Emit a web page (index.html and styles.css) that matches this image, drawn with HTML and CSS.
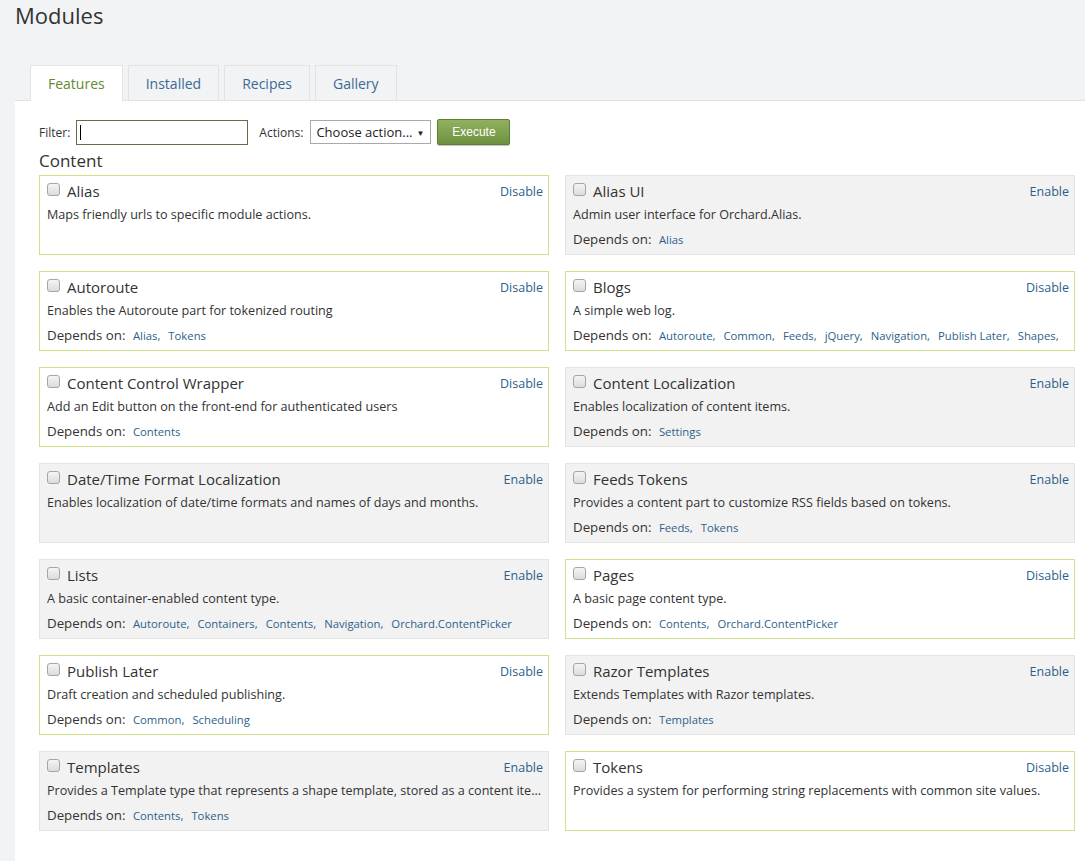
FILE: index.html
```html
<!DOCTYPE html>
<html lang="en">
<head>
<meta charset="utf-8">
<title>Modules</title>
<link rel="stylesheet" href="styles.css">
</head>
<body>
<h1 class="page-title">Modules</h1>
<nav class="tabs">
  <a class="tab active" href="#">Features</a>
  <a class="tab" href="#">Installed</a>
  <a class="tab" href="#">Recipes</a>
  <a class="tab" href="#">Gallery</a>
</nav>
<main class="panel">
  <div class="toolbar">
    <label class="lbl" for="filter">Filter:</label>
    <span class="filter-box"><input id="filter" class="filter" type="text"><span class="caret"></span></span>
    <label class="lbl actions-lbl" for="actions">Actions:</label>
    <span class="select" id="actions"><span>Choose action...</span><span class="arrow">&#9660;</span></span>
    <button class="execute" type="button">Execute</button>
  </div>
  <h2 class="category">Content</h2>
  <div class="grid">
    <section class="card on">
      <div class="head"><span class="chk"></span><span class="name">Alias</span><a class="act" href="#">Disable</a></div>
      <p class="desc">Maps friendly urls to specific module actions.</p>
    </section>
    <section class="card off">
      <div class="head"><span class="chk"></span><span class="name">Alias UI</span><a class="act" href="#">Enable</a></div>
      <p class="desc">Admin user interface for Orchard.Alias.</p>
      <div class="deps">Depends on: <a href="#">Alias</a></div>
    </section>

    <section class="card on">
      <div class="head"><span class="chk"></span><span class="name">Autoroute</span><a class="act" href="#">Disable</a></div>
      <p class="desc">Enables the Autoroute part for tokenized routing</p>
      <div class="deps">Depends on: <a href="#">Alias,</a><a href="#">Tokens</a></div>
    </section>
    <section class="card on">
      <div class="head"><span class="chk"></span><span class="name">Blogs</span><a class="act" href="#">Disable</a></div>
      <p class="desc">A simple web log.</p>
      <div class="deps">Depends on: <a href="#">Autoroute,</a><a href="#">Common,</a><a href="#">Feeds,</a><a href="#">jQuery,</a><a href="#">Navigation,</a><a href="#">Publish Later,</a><a href="#">Shapes,</a></div>
    </section>

    <section class="card on">
      <div class="head"><span class="chk"></span><span class="name">Content Control Wrapper</span><a class="act" href="#">Disable</a></div>
      <p class="desc">Add an Edit button on the front-end for authenticated users</p>
      <div class="deps">Depends on: <a href="#">Contents</a></div>
    </section>
    <section class="card off">
      <div class="head"><span class="chk"></span><span class="name">Content Localization</span><a class="act" href="#">Enable</a></div>
      <p class="desc">Enables localization of content items.</p>
      <div class="deps">Depends on: <a href="#">Settings</a></div>
    </section>

    <section class="card off">
      <div class="head"><span class="chk"></span><span class="name">Date/Time Format Localization</span><a class="act" href="#">Enable</a></div>
      <p class="desc">Enables localization of date/time formats and names of days and months.</p>
    </section>
    <section class="card off">
      <div class="head"><span class="chk"></span><span class="name">Feeds Tokens</span><a class="act" href="#">Enable</a></div>
      <p class="desc">Provides a content part to customize RSS fields based on tokens.</p>
      <div class="deps">Depends on: <a href="#">Feeds,</a><a href="#">Tokens</a></div>
    </section>

    <section class="card off">
      <div class="head"><span class="chk"></span><span class="name">Lists</span><a class="act" href="#">Enable</a></div>
      <p class="desc">A basic container-enabled content type.</p>
      <div class="deps">Depends on: <a href="#">Autoroute,</a><a href="#">Containers,</a><a href="#">Contents,</a><a href="#">Navigation,</a><a href="#">Orchard.ContentPicker</a></div>
    </section>
    <section class="card on">
      <div class="head"><span class="chk"></span><span class="name">Pages</span><a class="act" href="#">Disable</a></div>
      <p class="desc">A basic page content type.</p>
      <div class="deps">Depends on: <a href="#">Contents,</a><a href="#">Orchard.ContentPicker</a></div>
    </section>

    <section class="card on">
      <div class="head"><span class="chk"></span><span class="name">Publish Later</span><a class="act" href="#">Disable</a></div>
      <p class="desc">Draft creation and scheduled publishing.</p>
      <div class="deps">Depends on: <a href="#">Common,</a><a href="#">Scheduling</a></div>
    </section>
    <section class="card off">
      <div class="head"><span class="chk"></span><span class="name">Razor Templates</span><a class="act" href="#">Enable</a></div>
      <p class="desc">Extends Templates with Razor templates.</p>
      <div class="deps">Depends on: <a href="#">Templates</a></div>
    </section>

    <section class="card off">
      <div class="head"><span class="chk"></span><span class="name">Templates</span><a class="act" href="#">Enable</a></div>
      <p class="desc">Provides a Template type that represents a shape template, stored as a content ite...</p>
      <div class="deps">Depends on: <a href="#">Contents,</a><a href="#">Tokens</a></div>
    </section>
    <section class="card on">
      <div class="head"><span class="chk"></span><span class="name">Tokens</span><a class="act" href="#">Disable</a></div>
      <p class="desc">Provides a system for performing string replacements with common site values.</p>
    </section>
  </div>
</main>
</body>
</html>
```

FILE: styles.css
```css
* { box-sizing: border-box; }
html, body { height: 100%; }
body {
  margin: 0;
  background: #f2f3f5;
  font-family: "Open Sans", "Noto Sans", sans-serif;
  color: #333;
  display: flex;
  flex-direction: column;
}
.page-title {
  margin: 0;
  padding: 0 15px;
  font-size: 22px;
  font-weight: normal;
  line-height: 30px;
  color: #333;
}
.tabs {
  display: flex;
  gap: 5px;
  margin: 35px 0 0 30px;
  position: relative;
  z-index: 1;
}
.tab {
  display: block;
  height: 35px;
  line-height: 35px;
  padding: 0 17px;
  font-size: 14px;
  color: #3b6a94;
  text-decoration: none;
  background: #f2f3f5;
  border: 1px solid #e2e3e5;
  border-bottom: none;
}
.tab.wide { padding: 0 19px; }
.tab.active {
  background: #fff;
  color: #5f8a32;
  height: 36px;
  margin-bottom: -1px;
}
.panel {
  flex: 1;
  margin-left: 15px;
  background: #fff;
  border-top: 1px solid #e2e3e5;
  padding: 18px 10px 20px 24px;
}
.toolbar {
  display: flex;
  align-items: center;
  height: 26px;
}
.lbl { font-size: 12px; color: #333; margin-right: 6px; }
.actions-lbl { margin-left: 11px; margin-right: 7px; }
.filter-box { position: relative; display: block; }
.filter {
  display: block;
  width: 172px;
  height: 25px;
  border: 1px solid #6a6b45;
  padding: 0 4px;
  font: inherit;
  outline: none;
}
.caret {
  position: absolute;
  left: 4px;
  top: 5px;
  width: 1px;
  height: 15px;
  background: #000;
}
.select {
  display: flex;
  align-items: center;
  justify-content: space-between;
  width: 121px;
  height: 24px;
  border: 1px solid #a9a9a9;
  background: #fff;
  padding: 0 6px 0 5px;
  font-size: 13px;
  color: #222;
}
.select .arrow { font-size: 8px; color: #222; }
.execute {
  margin-left: 6px;
  width: 73px;
  height: 26px;
  border: 1px solid #5e7d36;
  border-radius: 2px;
  background: linear-gradient(#92b15f, #6d9141);
  color: #fff;
  font-family: "Liberation Sans", Arial, sans-serif;
  font-size: 12px;
  box-shadow: 0 1px 1px rgba(0,0,0,0.25);
}
.category {
  margin: 5px 0 3px;
  font-size: 17px;
  font-weight: normal;
  line-height: 22px;
  color: #333;
}
.grid {
  display: grid;
  grid-template-columns: 510px 510px;
  column-gap: 16px;
  row-gap: 16px;
  grid-auto-rows: 80px;
}
.card {
  border: 1px solid;
  padding: 3px 5px 0 7px;
  overflow: hidden;
}
.card.on { background: #fff; border-color: #d2e08e; }
.card.off { background: #f2f2f2; border-color: #e4e4e4; }
.head {
  display: flex;
  align-items: center;
  height: 24px;
}
.chk {
  width: 13px;
  height: 13px;
  border: 1px solid #a6a6a6;
  border-radius: 3px;
  background: linear-gradient(#f4f4f4, #dcdcdc);
  margin-right: 7px;
  margin-top: -4px;
}
.name { font-size: 15px; color: #333; flex: 1; }
.act {
  font-size: 12.5px;
  color: #2e5f8a;
  text-decoration: none;
}
.desc {
  margin: 0;
  font-size: 12.6px;
  line-height: 23px;
  color: #333;
  white-space: nowrap;
}
.deps {
  font-size: 13.3px;
  line-height: 27px;
  color: #333;
  white-space: nowrap;
  overflow: hidden;
}
.deps a {
  font-size: 11.3px;
  color: #2e5f8a;
  text-decoration: none;
  margin-left: 4px;
}
.deps a + a { margin-left: 8px; }
```
